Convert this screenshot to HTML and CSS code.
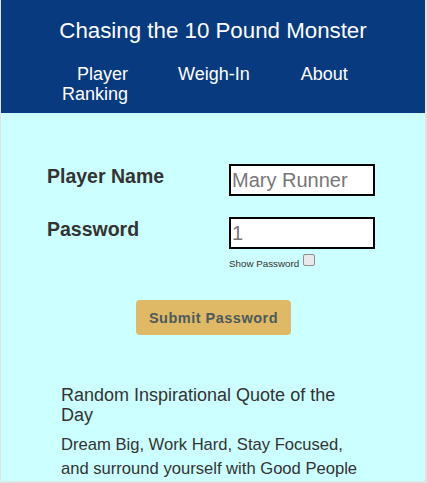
FILE: index.html
```html
<!DOCTYPE html>
<html lang="en">
<head>
<meta charset="utf-8">
<title>Chasing the 10 Pound Monster</title>
<link rel="stylesheet" href="styles.css">
</head>
<body>
<div class="page">
  <header class="header">
    <h1 class="title">Chasing the 10 Pound Monster</h1>
    <nav class="nav">
      <a class="nav-link nav-ranking" href="#">Player<br>Ranking</a>
      <a class="nav-link nav-weigh" href="#">Weigh-In</a>
      <a class="nav-link nav-about" href="#">About</a>
    </nav>
  </header>
  <main class="main">
    <form class="login">
      <div class="row">
        <label class="label" for="name">Player Name</label>
        <input class="field" id="name" type="text" value="Mary Runner">
      </div>
      <div class="row row-pass">
        <label class="label" for="pass">Password</label>
        <div class="pass-col">
          <input class="field" id="pass" type="text" value="1">
          <div class="show"><span class="show-text">Show Password</span><span class="check"></span></div>
        </div>
      </div>
      <div class="actions">
        <button class="submit" type="button">Submit Password</button>
      </div>
    </form>
    <section class="quote">
      <h2 class="quote-title">Random Inspirational Quote of the Day</h2>
      <p class="quote-text">Dream Big, Work Hard, Stay Focused, and surround yourself with Good People</p>
    </section>
  </main>
</div>
</body>
</html>
```
FILE: styles.css
```css
html, body {
  margin: 0;
  padding: 0;
  background: #ffffff;
}
.page {
  box-sizing: border-box;
  width: 427px;
  height: 483px;
  border-left: 1px solid #e2e2e2;
  border-right: 2px solid #e2e2e2;
  border-bottom: 2px solid #e2e2e2;
  background: #ccffff;
  overflow: hidden;
  font-family: "Liberation Sans", Arial, sans-serif;
  color: #333333;
}
.header {
  background: #083a7f;
  height: 113px;
  box-sizing: border-box;
  padding-top: 17px;
}
.title {
  margin: 0;
  font-weight: normal;
  font-size: 22.3px;
  line-height: 28px;
  color: #ffffff;
  text-align: center;
}
.nav {
  display: flex;
  align-items: flex-start;
  margin-top: 19px;
  font-size: 18px;
  line-height: 20px;
}
.nav-link {
  color: #ffffff;
  text-decoration: none;
}
.nav-ranking {
  margin-left: 61px;
  width: 66px;
  text-align: right;
}
.nav-weigh {
  margin-left: 50px;
}
.nav-about {
  margin-left: 51px;
}
.main {
  padding-top: 51px;
}
.login {
  margin: 0;
}
.row {
  display: grid;
  grid-template-columns: 182px 146px;
  padding-left: 46px;
  align-items: start;
}
.row-pass {
  margin-top: 21px;
}
.label {
  font-size: 19.5px;
  font-weight: bold;
  line-height: 22px;
  padding-top: 1px;
  color: #333333;
}
.field {
  box-sizing: border-box;
  width: 146px;
  height: 32px;
  border: 2px solid #000000;
  background: #ffffff;
  padding: 0 1px;
  font-family: "Liberation Sans", Arial, sans-serif;
  font-size: 20px;
  color: #777777;
  outline: none;
  margin: 0;
}
.show {
  display: flex;
  align-items: center;
  margin-top: 4px;
  height: 14px;
}
.show-text {
  font-size: 9.8px;
  color: #333333;
  padding-top: 6px;
}
.check {
  display: inline-block;
  box-sizing: border-box;
  width: 12px;
  height: 12px;
  margin-left: 4px;
  border: 1px solid #8f8f8f;
  border-radius: 2px;
  background: #e9e9e9;
}
.actions {
  display: flex;
  justify-content: center;
  margin-top: 33px;
  padding-left: 1px;
}
.submit {
  width: 155px;
  height: 35px;
  border: none;
  border-radius: 4px;
  background: #e0b967;
  color: #4d5a5a;
  font-family: "Liberation Sans", Arial, sans-serif;
  font-weight: bold;
  font-size: 14.5px;
  letter-spacing: 0.5px;
  padding: 0;
}
.quote {
  padding: 0 60px;
  margin-top: 50px;
}
.quote-title {
  margin: 0;
  font-weight: normal;
  font-size: 18px;
  line-height: 20px;
  color: #333333;
  width: 290px;
}
.quote-text {
  margin: 8px 0 0;
  font-size: 16.6px;
  line-height: 24px;
  color: #333333;
  width: 310px;
}
```
